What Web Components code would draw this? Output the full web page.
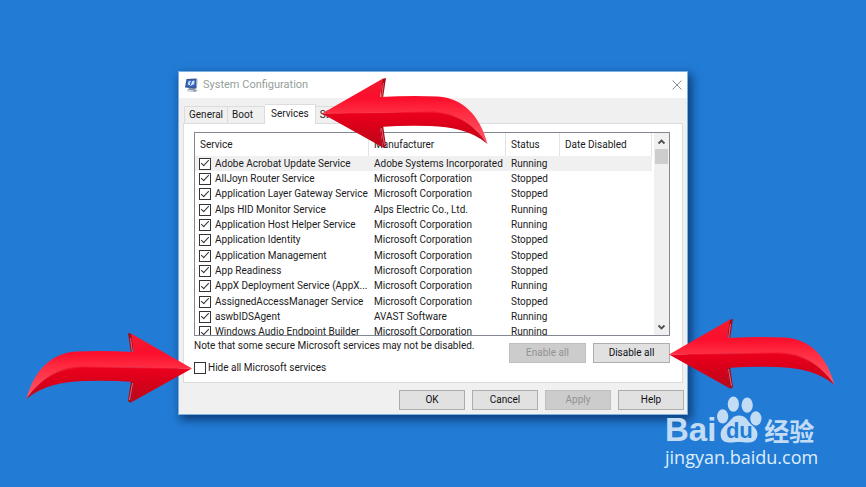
<!DOCTYPE html>
<html lang="en">
<head>
<meta charset="utf-8">
<title>System Configuration</title>
<style>
html, body { margin: 0; }
body { background: #227cd6; font: 10px/14px Roboto, "Liberation Sans", sans-serif; color: #1b1b22; }
</style>
</head>
<body>
<desk-top>
  <config-window>
    <tab-bar slot="tabs"></tab-bar>
    <service-list></service-list>
    <service-options></service-options>
    <dialog-button slot="actions">OK</dialog-button>
    <dialog-button slot="actions">Cancel</dialog-button>
    <dialog-button slot="actions" disabled>Apply</dialog-button>
    <dialog-button slot="actions">Help</dialog-button>
  </config-window>
  <red-arrow slot="marks" class="tabs"></red-arrow>
  <red-arrow slot="marks" class="disable"></red-arrow>
  <red-arrow slot="marks" class="hide"></red-arrow>
  <site-mark slot="marks"></site-mark>
</desk-top>
<script>
const define = (name, html, setup) => customElements.define(name, class extends HTMLElement {
  connectedCallback() {
    if (this.shadowRoot) return;
    this.attachShadow({ mode: 'open' }).innerHTML = html;
    if (setup) setup(this, this.shadowRoot);
  }
});

define('desk-top', `
<style>
:host { display: grid; place-items: center; min-height: 100vh; position: relative; overflow: hidden; }
main { width: 100%; max-width: 510px; position: relative; margin-bottom: 1px; }
::slotted(red-arrow) { position: absolute; }
::slotted(.tabs) { left: 142px; top: 6px; }
::slotted(.disable) { left: 489px; top: 247px; }
::slotted(.hide) { left: -154px; top: 261px; transform: scaleX(-1); }
::slotted(site-mark) { position: absolute; left: 487px; top: 323px; }
</style>
<main><slot></slot><slot name="marks"></slot></main>`);

define('config-window', `
<style>
:host { display: block; background: #f0f0f0; border: 1px solid #7fb1e0; box-sizing: border-box; box-shadow: 3px 4px 9px 1px rgba(0,20,60,.6); }
header { display: flex; align-items: center; gap: 4px; background: #fff; height: 26px; padding: 0 4px 0 5px; }
h1 { flex: 1; margin: 0; font: 11px/16px Roboto, "Liberation Sans", sans-serif; color: #94a09a; }
button { border: 0; background: none; padding: 0; width: 12px; height: 12px; display: block; }
svg { display: block; }
.body { padding: 6px 4px 0; }
section { background: #fff; border: 1px solid #dcdcdc; padding: 8px 12px 7px 10px; }
footer { display: flex; justify-content: flex-end; gap: 7px; padding: 7px 0 4px; margin-right: -1px; }
</style>
<header>
  <svg width="15" height="15" viewBox="0 0 15 15" aria-hidden="true">
    <path d="M5 10h6l.5 2 2.500.5-3 1.500-8-1z" fill="#8f98ac"/>
    <path d="M2.500 1l10-.5L12 10.500 1 9.500z" fill="#3a558f"/>
    <path d="M12.500.500l1 .8L13 10.500l-1 .3z" fill="#8fa0c4"/>
    <path d="M3.400 2l8-.3-.5 7.500-8.400-.8z" fill="#3364c4"/>
    <path d="M4.500 3l2.500-.2L5.500 7l-1.800-.2zM8 3l2.500-.4-.3 4-3.200.6z" fill="#b8d2f8"/>
    <path d="M4.500 5.500l2.200 2L10 3.500" fill="none" stroke="#fff" stroke-width=".8"/>
    <path d="M4 12.400l6 .7" stroke="#dde2ee"/>
  </svg>
  <h1>System Configuration</h1>
  <button aria-label="Close"><svg width="12" height="12" viewBox="0 0 12 12"><path d="M1.500 1.500l9 9m0-9l-9 9" fill="none" stroke="#8d8d8d"/></svg></button>
</header>
<div class="body">
  <slot name="tabs"></slot>
  <section><slot></slot></section>
  <footer><slot name="actions"></slot></footer>
</div>`);

define('tab-bar', `
<style>
:host { display: flex; align-items: flex-end; padding: 0 1px; }
button { font: inherit; color: inherit; background: #f0f0f0; border: 1px solid #dcdcdc; border-bottom: 0; border-left-width: 0; height: 17px; padding: 0 4px; text-align: left; }
button:first-child { border-left-width: 1px; }
button.wide { padding-right: 11px; }
[aria-selected=true] { background: #fff; height: 20px; padding: 0 6px 2px; margin-bottom: -1px; position: relative; }
div { display: flex; align-items: flex-end; }
</style>
<div role="tablist">
<button role="tab">General</button><button role="tab" class="wide">Boot</button><button role="tab" aria-selected="true">Services</button><button role="tab">Startup</button>
</div>`);

define('check-box', `
<style>
:host { display: block; min-width: 0; }
label { display: flex; align-items: center; gap: var(--gap, 4px); white-space: nowrap; }
input { appearance: none; flex: none; box-sizing: border-box; width: 12px; height: 12px; margin: 0; border: 1px solid #333; background: #fff; display: grid; place-items: center; }
input:checked::after { content: ""; width: 8px; height: 4px; margin-bottom: 3px; border: solid #333; border-width: 0 0 1px 1px; transform: rotate(-47deg); box-sizing: border-box; }
</style>
<label><input type="checkbox"><slot></slot></label>`,
(el, root) => { root.querySelector('input').checked = el.hasAttribute('checked'); });

define('dialog-button', `
<style>
:host { display: block; width: 66px; }
:host([wide]) { width: 77px; }
button { width: 100%; height: 20px; box-sizing: border-box; padding: 0; font: inherit; color: #101018; background: #e1e1e1; border: 1px solid #adadad; }
button:disabled { background: #ccc; border-color: #bfbfbf; color: #929292; }
</style>
<button><slot></slot></button>`,
(el, root) => { root.querySelector('button').disabled = el.hasAttribute('disabled'); });

const M = 'Microsoft Corporation';
const services = [
  ['Adobe Acrobat Update Service', 'Adobe Systems Incorporated', 'Running'],
  ['AllJoyn Router Service', M, 'Stopped'],
  ['Application Layer Gateway Service', M, 'Stopped'],
  ['Alps HID Monitor Service', 'Alps Electric Co., Ltd.', 'Running'],
  ['Application Host Helper Service', M, 'Running'],
  ['Application Identity', M, 'Stopped'],
  ['Application Management', M, 'Stopped'],
  ['App Readiness', M, 'Stopped'],
  ['AppX Deployment Service (AppX...', M, 'Running'],
  ['AssignedAccessManager Service', M, 'Stopped'],
  ['aswbIDSAgent', 'AVAST Software', 'Running'],
  ['Windows Audio Endpoint Builder', M, 'Running']
];

define('service-list', `
<style>
:host { display: flex; height: 202px; border: 1px solid #828790; overflow: hidden; background: #fff; }
table { flex: 1; min-width: 0; display: grid; grid-template-rows: 23px 184px; }
thead, tbody { display: grid; }
tbody { grid-auto-rows: 1fr; }
tr { display: grid; grid-template-columns: 174fr 137fr 54fr 92fr; align-items: center; }
th { font-weight: normal; text-align: left; align-self: stretch; border-right: 1px solid #e3e3e3; line-height: 23px; padding: 0 5px; }
td { padding: 0 4px; white-space: nowrap; min-width: 0; }
td + td { padding: 0 5px; }
tbody tr:first-child { background: #f0f0f0; }
</style>
<table>
<thead><tr><th>Service</th><th>Manufacturer</th><th>Status</th><th>Date Disabled</th></tr></thead>
<tbody>${services.map(([s, m, t]) => `<tr><td><check-box checked>${s}</check-box></td><td>${m}</td><td>${t}</td><td></td></tr>`).join('')}</tbody>
</table>
<scroll-rail></scroll-rail>`);

define('scroll-rail', `
<style>
:host { display: flex; flex-direction: column; width: 15px; margin-left: 2px; background: #f0f0f0; }
button { border: 0; background: none; padding: 0; height: 16px; display: grid; place-items: center; }
.track { flex: 1; }
.thumb { height: 15px; margin: 0 1px; background: #cdcdcd; }
</style>
<button aria-label="Scroll up"><svg width="9" height="7" viewBox="0 0 9 7"><path d="M1.500 5.500l3-3 3 3" fill="none" stroke="#505050" stroke-width="1.800"/></svg></button>
<div class="track"><div class="thumb"></div></div>
<button aria-label="Scroll down"><svg width="9" height="7" viewBox="0 0 9 7"><path d="M1.500 1.500l3 3 3-3" fill="none" stroke="#505050" stroke-width="1.800"/></svg></button>`);

define('service-options', `
<style>
:host { display: flex; align-items: flex-start; gap: 7px; padding-top: 3px; }
.text { flex: 1; display: grid; gap: 8px; }
p { margin: 0; }
.text check-box { --gap: 2px; }
dialog-button { margin-top: 4px; }
</style>
<div class="text"><p>Note that some secure Microsoft services may not be disabled.</p><check-box>Hide all Microsoft services</check-box></div>
<dialog-button wide disabled>Enable all</dialog-button>
<dialog-button wide>Disable all</dialog-button>`);

let arrowCount = 0;
customElements.define('red-arrow', class extends HTMLElement {
  connectedCallback() {
    const n = arrowCount++;
    this.attachShadow({ mode: 'open' }).innerHTML = `
<style>:host { display: block; } svg { display: block; }</style>
<svg width="170" height="72" viewBox="0 0 170 72" aria-hidden="true">
<defs>
<linearGradient id="a${n}" x1="0" y1="0" x2="0" y2="1"><stop offset="0" stop-color="#f21c30"/><stop offset=".3" stop-color="#fb0e2c"/><stop offset=".5" stop-color="#ff2a40"/><stop offset="1" stop-color="#ff5868"/></linearGradient>
<linearGradient id="b${n}" x1="0" y1="0" x2="0" y2="1"><stop offset="0" stop-color="#ed001e"/><stop offset=".45" stop-color="#d80019"/><stop offset="1" stop-color="#b90a1c"/></linearGradient>
</defs>
<path d="M62 2L66 1 63 21 60 26ZM60 50L63 48 66 69 63 71Z" fill="#a30b1c"/>
<path d="M63.500 6L61.500 21M61.500 51L64.500 68" stroke="#ff7580" stroke-width=".8"/>
<path d="M2 36.500L63 1.500 60 20 Q90 18.500 118 19.500C142 21 160 38 167.500 67C151 44 133 35 111 35Z" fill="url(#a${n})"/>
<path d="M2 36.500L112 34.500C135 35 153 46 167.500 67C151 53 132 50 110 49Q86 48 60 50L63 70.500Z" fill="url(#b${n})"/>
<path d="M5 36.500L108 35C134 35 151 46 164 61" fill="none" stroke="#ff5262" stroke-width=".8" opacity=".4"/>
</svg>`;
  }
});

define('site-mark', `
<style>
:host { display: block; color: #c3dcf5; white-space: nowrap; }
.logo { display: flex; align-items: flex-end; height: 49px; }
.bai { font: bold 33px/30px "Liberation Sans", sans-serif; margin-bottom: -2px; }
.paw { position: relative; }
.paw span { position: absolute; left: 0; right: 0; bottom: 0; text-align: center; font: bold 22px/24px "Liberation Sans", sans-serif; color: #227cd6; }
.cjk { font: bold 25px/30px "Noto Sans CJK SC", sans-serif; margin: 0 0 -2px 2px; }
a { display: block; font: 18px/24px "Open Sans", "Noto Sans", sans-serif; color: #dfedfb; text-decoration: none; margin-top: 2px; }
svg { display: block; }
</style>
<div class="logo"><span class="bai">Bai</span>
<div class="paw"><svg width="46" height="47" viewBox="0 0 44 46" aria-hidden="true"><g fill="currentColor"><ellipse cx="6" cy="20" rx="5.500" ry="7"/><ellipse cx="16.500" cy="8" rx="5.500" ry="7.500"/><ellipse cx="30" cy="9" rx="5.500" ry="7.500"/><ellipse cx="38.500" cy="22" rx="5.500" ry="7"/><path d="M22 19c6 0 8 4 11 8 3 3 8 6 7 12-1 5-5 7-9 6.500-4 0-6-.5-9-.5s-5 .5-9 .5c-5 .3-9-2-9-8 0-5 4-8 7-11s5-7.500 11-7.500z"/></g></svg><span>du</span></div>
<span class="cjk">经验</span></div>
<a href="#">jingyan.baidu.com</a>`);
</script>
</body>
</html>
